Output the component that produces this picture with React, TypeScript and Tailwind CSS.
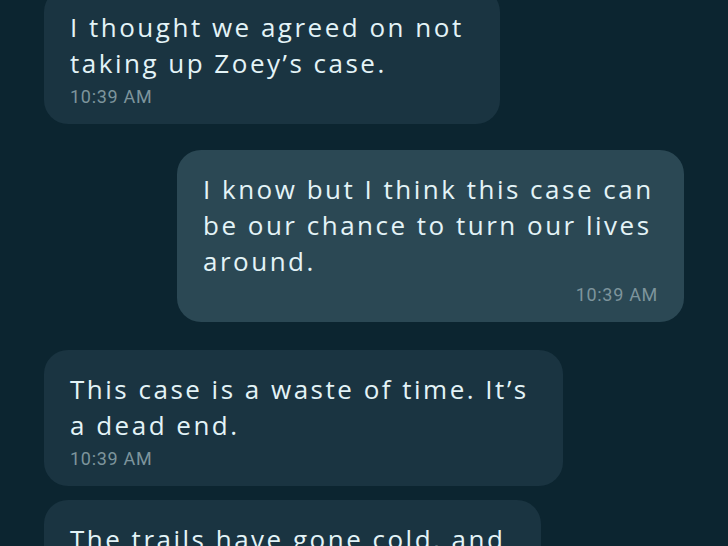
import type { ReactNode } from 'react';

type Message = {
  id: number;
  mine: boolean;
  lines: string[];
  time: string;
  width: string;
  gapTop: string;
};

const MESSAGES: Message[] = [
  { id: 1, mine: false, lines: ['I thought we agreed on not', 'taking up Zoey’s case.'], time: '10:39 AM', width: 'w-[456px]', gapTop: '' },
  {
    id: 2,
    mine: true,
    lines: ['I know but I think this case can', 'be our chance to turn our lives', 'around.'],
    time: '10:39 AM',
    width: 'w-[507px]',
    gapTop: 'mt-[26px]'
  },
  { id: 3, mine: false, lines: ['This case is a waste of time. It’s', 'a dead end.'], time: '10:39 AM', width: 'w-[519px]', gapTop: 'mt-[28px]' },
  { id: 4, mine: false, lines: ['The trails have gone cold, and', 'there’s nothing left to find.'], time: '10:40 AM', width: 'w-[497px]', gapTop: 'mt-[14px]' }
];

function Bubble({ mine, width, children, time }: { mine: boolean; width: string; children: ReactNode; time: string }) {
  return (
    <div
      className={`${width} rounded-[24px] px-[26px] pt-[21px] pb-[15px] ${
        mine ? 'self-end bg-[#2b4854]' : 'self-start bg-[#1a3441]'
      }`}
    >
      <div className="font-['Open_Sans',sans-serif] text-[26px] leading-[36px] tracking-[2.5px] text-[#e3f3f7]">{children}</div>
      <div
        className={`mt-[4px] font-['Roboto',sans-serif] text-[18px] leading-[24px] tracking-[0.7px] text-[#7d949c] ${
          mine ? 'text-right' : 'text-left'
        }`}
      >
        {time}
      </div>
    </div>
  );
}

export default function App() {
  return (
    <div className="h-[546px] w-full overflow-hidden bg-[#0c2530]">
      <div className="-mt-[12px] flex flex-col px-[44px]">
        {MESSAGES.map((m) => (
          <div key={m.id} className={`flex flex-col ${m.gapTop}`}>
            <Bubble mine={m.mine} width={m.width} time={m.time}>
              {m.lines.map((line) => (
                <div key={line} className="whitespace-nowrap">
                  {line}
                </div>
              ))}
            </Bubble>
          </div>
        ))}
      </div>
    </div>
  );
}
